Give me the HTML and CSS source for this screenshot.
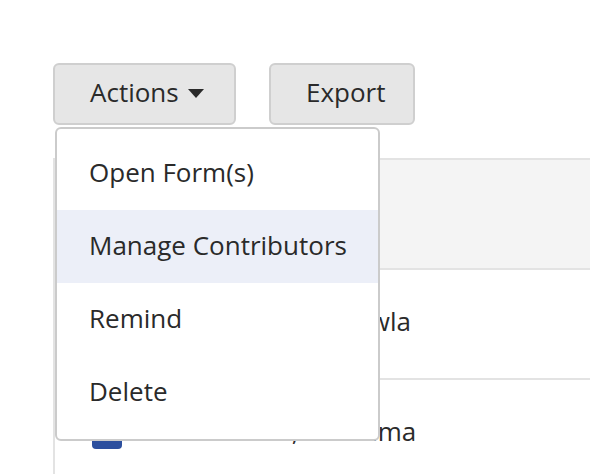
FILE: index.html
```html
<!DOCTYPE html>
<html lang="en">
<head>
<meta charset="utf-8">
<title>Actions menu</title>
<link rel="stylesheet" href="styles.css">
</head>
<body>
<div class="page">
  <div class="toolbar">
    <div class="actions-wrap">
      <button class="btn btn-actions" type="button">Actions <span class="caret"></span></button>
      <div class="menu">
        <div class="menu-item">Open Form(s)</div>
        <div class="menu-item active">Manage Contributors</div>
        <div class="menu-item">Remind</div>
        <div class="menu-item">Delete</div>
      </div>
    </div>
    <button class="btn btn-export" type="button">Export</button>
  </div>
  <div class="table">
    <div class="thead"></div>
    <div class="row">
      <span class="check"></span>
      <span class="name">Kalpana J. Chawla</span>
    </div>
    <div class="row">
      <span class="check"></span>
      <span class="name">Sharma, Prathima</span>
    </div>
  </div>
</div>
</body>
</html>
```

FILE: styles.css
```css
html, body {
  margin: 0;
  padding: 0;
  background: #ffffff;
}

body {
  font-family: "Open Sans", "Liberation Sans", sans-serif;
  color: #2a2a2a;
  width: 590px;
  height: 474px;
  overflow: hidden;
}

.page {
  padding-top: 63px;
}

.toolbar {
  display: flex;
  gap: 33px;
  padding-left: 53px;
}

.actions-wrap {
  position: relative;
}

.btn {
  box-sizing: border-box;
  height: 62px;
  display: flex;
  align-items: center;
  padding: 0 33px 4px 35px;
  background: #e6e6e6;
  border: 2px solid #cfcfcf;
  border-radius: 6px;
  font-family: inherit;
  font-size: 26px;
  color: #2a2a2a;
}

.btn-actions {
  width: 183px;
}

.btn-export {
  width: 146px;
}

.caret {
  display: inline-block;
  width: 0;
  height: 0;
  margin-left: 9px;
  margin-top: 3px;
  border-left: 8.5px solid transparent;
  border-right: 8.5px solid transparent;
  border-top: 9px solid #2a2a2a;
}

.menu {
  position: absolute;
  left: 2px;
  top: 64px;
  z-index: 2;
  box-sizing: border-box;
  width: 325px;
  padding: 8px 0 10px;
  background: #ffffff;
  border: 2px solid #cbcbcb;
  border-radius: 6px;
}

.menu-item {
  box-sizing: border-box;
  height: 73px;
  display: flex;
  align-items: center;
  padding: 0 0 4px 32px;
  font-size: 26px;
}

.menu-item.active {
  background: #eceff8;
}

.table {
  margin-top: 33px;
  margin-left: 53px;
  border-left: 2px solid #e3e3e3;
  border-top: 2px solid #e3e3e3;
}

.thead {
  height: 108px;
  background: #f4f4f4;
  border-bottom: 2px solid #e3e3e3;
}

.row {
  box-sizing: border-box;
  height: 110px;
  display: flex;
  align-items: center;
  padding-bottom: 7px;
  border-bottom: 2px solid #e3e3e3;
  font-size: 26px;
}

.check {
  box-sizing: border-box;
  width: 30px;
  height: 28px;
  margin-left: 37px;
  margin-top: 9px;
  background: #2c4f9e;
  border-radius: 4px;
}

.name {
  margin-left: 76px;
  white-space: nowrap;
}
```
